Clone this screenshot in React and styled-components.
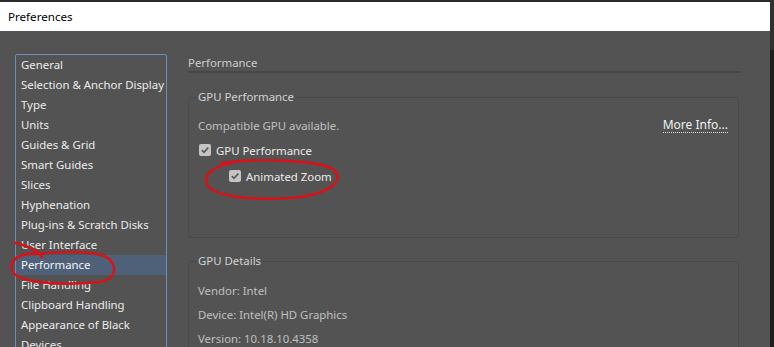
import React from 'react';
import styled, { createGlobalStyle } from 'styled-components';

const GlobalStyle = createGlobalStyle`
    html, body {
        margin: 0;
        padding: 0;
        background-color: #1f1f1f;
        overflow: hidden;
    }
    body {
        font-family: "Noto Sans", "Open Sans", sans-serif;
        font-size: 11.4px;
    }
`;

const Screen = styled.div`
    display: flex;
    width: 774px;
    height: 347px;
    overflow: hidden;
`;

const Window = styled.div`
    display: flex;
    flex-direction: column;
    width: 770px;
    height: 347px;
    border-top: 2px solid #2b2b2b;
    box-sizing: border-box;
    position: relative;
`;

const ScreenEdge = styled.div`
    flex: 1;
    background: linear-gradient(#303030 0 50px, #1f1f1f 50px);
`;

const TitleBar = styled.div`
    height: 29px;
    flex-shrink: 0;
    background-color: #ffffff;
    color: #000;
    display: flex;
    align-items: center;
    padding-left: 8px;
    font-size: 11.6px;
`;

const Body = styled.div`
    flex: 1;
    display: flex;
    gap: 21px;
    align-items: flex-start;
    background-color: #535353;
    padding: 23px 0 0 15px;
`;

const CategoryList = styled.ul`
    list-style: none;
    margin: 0;
    padding: 0;
    width: 150px;
    height: 320px;
    border: 1px solid #6b8fb8;
    border-radius: 2px;
    flex-shrink: 0;
`;

const CategoryItem = styled.li`
    height: 20px;
    line-height: 20px;
    padding-left: 5px;
    color: ${p => (p.$selected ? '#f4f4f4' : '#ececec')};
    white-space: nowrap;
    background-color: ${p => (p.$selected ? '#4e6178' : 'transparent')};
`;

const Content = styled.div`
    width: 553px;
    display: flex;
    flex-direction: column;
`;

const SectionTitle = styled.div`
    color: #cdcdcd;
    height: 17px;
    line-height: 17px;
    border-bottom: 2px solid #474747;
`;

const GroupBox = styled.fieldset`
    margin: ${p => p.$top}px 2px 0 0;
    padding: 0 10px 0 9px;
    border: 1px solid #4a4a4a;
    border-radius: 3px;
    height: ${p => p.$height}px;
    box-sizing: border-box;
    display: flex;
    flex-direction: column;
    min-width: 0;

    legend {
        color: #d2d2d2;
        padding: 0 1px;
        margin-left: -1px;
        line-height: 14px;
    }
`;

const InfoRow = styled.div`
    display: flex;
    justify-content: space-between;
    align-items: center;
    height: 24px;
    margin-top: ${p => p.$top || 0}px;
    color: #c0c0c0;
`;

const MoreInfo = styled.span`
    color: #f0f0f0;
    font-size: 12px;
    border-bottom: 1px dotted #e0e0e0;
    line-height: 14px;
`;

const CheckRow = styled.label`
    display: flex;
    align-items: center;
    gap: 5px;
    height: 26px;
    padding-left: ${p => p.$indent || 1}px;
    color: #ececec;
`;

const Box = styled.span`
    width: 12px;
    height: 12px;
    border-radius: 2px;
    background-color: #c4c4c4;
    display: flex;
    align-items: center;
    justify-content: center;
`;

const Annotations = styled.svg`
    position: absolute;
    left: 0;
    top: -2px;
    width: 770px;
    height: 347px;
    pointer-events: none;
`;

const categories = [
    'General',
    'Selection & Anchor Display',
    'Type',
    'Units',
    'Guides & Grid',
    'Smart Guides',
    'Slices',
    'Hyphenation',
    'Plug-ins & Scratch Disks',
    'User Interface',
    'Performance',
    'File Handling',
    'Clipboard Handling',
    'Appearance of Black',
    'Devices',
];

function Checkbox({ label, indent }) {
    return (
        <CheckRow $indent={indent}>
            <Box>
                <svg width="10" height="10" viewBox="0 0 10 10">
                    <path d="M1.8 5.2 L4 7.3 L8.3 2.6" fill="none" stroke="#5a5a5a" strokeWidth="1.6" />
                </svg>
            </Box>
            {label}
        </CheckRow>
    );
}

export default function App() {
    return (
        <Screen>
            <GlobalStyle />
            <Window>
                <TitleBar>Preferences</TitleBar>
                <Body>
                    <CategoryList>
                        {categories.map(c => (
                            <CategoryItem key={c} $selected={c === 'Performance'}>{c}</CategoryItem>
                        ))}
                    </CategoryList>
                    <Content>
                        <SectionTitle>Performance</SectionTitle>
                        <GroupBox $top={17} $height={148}>
                            <legend>GPU Performance</legend>
                            <InfoRow $top={9}>
                                <span>Compatible GPU available.</span>
                                <MoreInfo>More Info...</MoreInfo>
                            </InfoRow>
                            <Checkbox label="GPU Performance" />
                            <Checkbox label="Animated Zoom" indent={31} />
                        </GroupBox>
                        <GroupBox $top={16} $height={120}>
                            <legend>GPU Details</legend>
                            <InfoRow $top={10}>Vendor: Intel</InfoRow>
                            <InfoRow>Device: Intel(R) HD Graphics</InfoRow>
                            <InfoRow>Version: 10.18.10.4358</InfoRow>
                        </GroupBox>
                    </Content>
                </Body>
                <Annotations viewBox="0 0 770 347">
                    <path
                        d="M222 163 C 260 158, 320 160, 334 170 C 345 180, 330 195, 290 198 C 250 201, 212 196, 207 184 C 203 174, 215 166, 232 163"
                        fill="none" stroke="#d3141b" strokeWidth="2.6" strokeLinecap="round"
                    />
                    <path
                        d="M15 243 C 28 246, 38 250, 42 257 M 42 254 C 22 252, 9 258, 12 270 C 15 283, 60 286, 100 282 C 118 279, 118 262, 104 256 C 86 250, 58 252, 33 254"
                        fill="none" stroke="#d3141b" strokeWidth="2.6" strokeLinecap="round"
                    />
                </Annotations>
            </Window>
            <ScreenEdge />
        </Screen>
    );
}
